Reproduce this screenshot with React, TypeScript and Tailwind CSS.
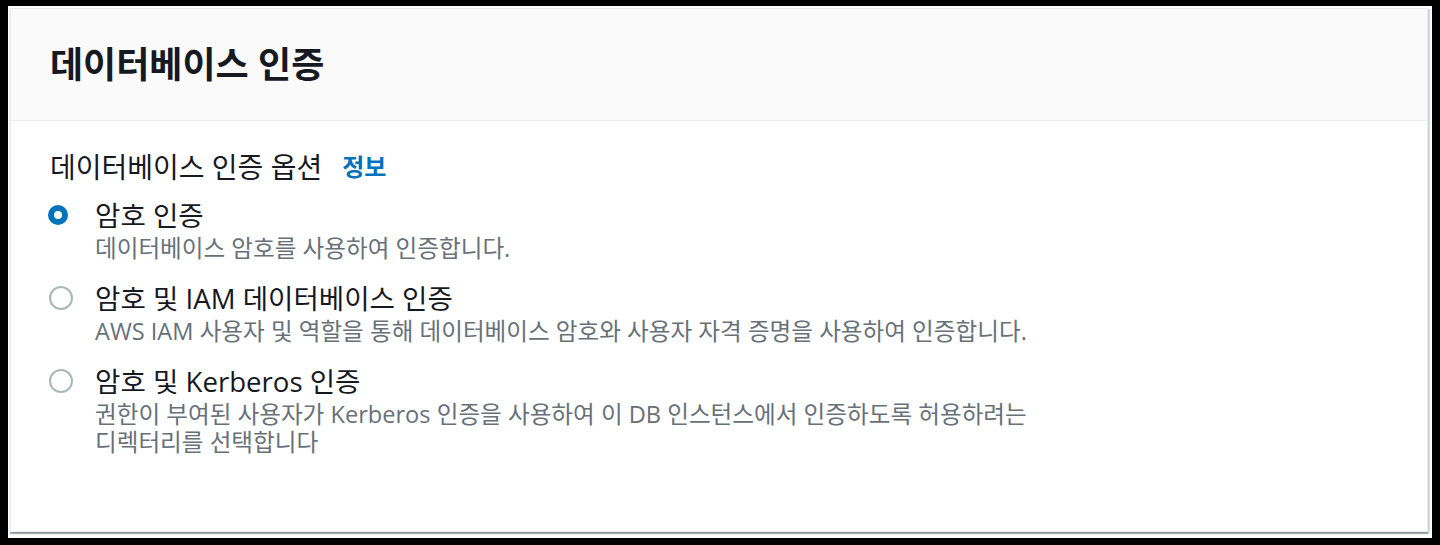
import React from "react";

const font = { fontFamily: '"Open Sans", "Noto Sans CJK KR", sans-serif' };

function Radio({ checked }: { checked?: boolean }) {
  if (checked) {
    return (
      <div className="ml-[-2px] mt-[7px] w-[20px] h-[20px] rounded-full bg-[#0073bb] flex items-center justify-center shrink-0">
        <div className="w-[8px] h-[8px] rounded-full bg-white" />
      </div>
    );
  }
  return (
    <div className="ml-[-1px] mt-[5px] w-[24px] h-[24px] rounded-full border-2 border-[#aab7b8] bg-white shrink-0" />
  );
}

function Option({
  checked,
  label,
  desc,
}: {
  checked?: boolean;
  label: string;
  desc: React.ReactNode;
}) {
  return (
    <div className="flex">
      <div className="w-[45px] shrink-0">
        <Radio checked={checked} />
      </div>
      <div className="flex flex-col">
        <div className="text-[27.6px] leading-[34px] text-[#16191f]">{label}</div>
        <div className="mt-[2px] text-[23.6px] leading-[28px] text-[#687078]">{desc}</div>
      </div>
    </div>
  );
}

export default function App() {
  return (
    <div className="w-[1440px] h-[545px] bg-black pt-[6px] pl-[8px]" style={font}>
      <div className="w-[1424px] h-[532px] bg-white pt-[2px] pl-[2px]">
        <div className="w-[1418px] h-[524px] bg-white border border-[#eaeded] shadow-[0_2px_1px_0_rgba(0,28,36,0.35),2px_1px_1px_0_rgba(0,28,36,0.15)] flex flex-col">
          <div className="h-[112px] bg-[#fafafa] border-b border-[#eaeded] flex items-center pl-[39px]">
            <h2 className="text-[36px] font-bold text-[#16191f] leading-[44px]">데이터베이스 인증</h2>
          </div>
          <div className="pl-[39px] pt-[29px] flex flex-col">
            <div className="flex items-center gap-[20px] leading-[34px] text-[#16191f]">
              <span className="text-[28px]">데이터베이스 인증 옵션</span>
              <span className="text-[24px] font-bold text-[#0073bb]">정보</span>
            </div>
            <div className="flex flex-col gap-[19px] mt-[14px]">
              <Option checked label="암호 인증" desc="데이터베이스 암호를 사용하여 인증합니다." />
              <Option
                label="암호 및 IAM 데이터베이스 인증"
                desc="AWS IAM 사용자 및 역할을 통해 데이터베이스 암호와 사용자 자격 증명을 사용하여 인증합니다."
              />
              <Option
                label="암호 및 Kerberos 인증"
                desc={
                  <>
                    권한이 부여된 사용자가 Kerberos 인증을 사용하여 이 DB 인스턴스에서 인증하도록 허용하려는
                    <br />
                    디렉터리를 선택합니다
                  </>
                }
              />
            </div>
          </div>
        </div>
      </div>
    </div>
  );
}
